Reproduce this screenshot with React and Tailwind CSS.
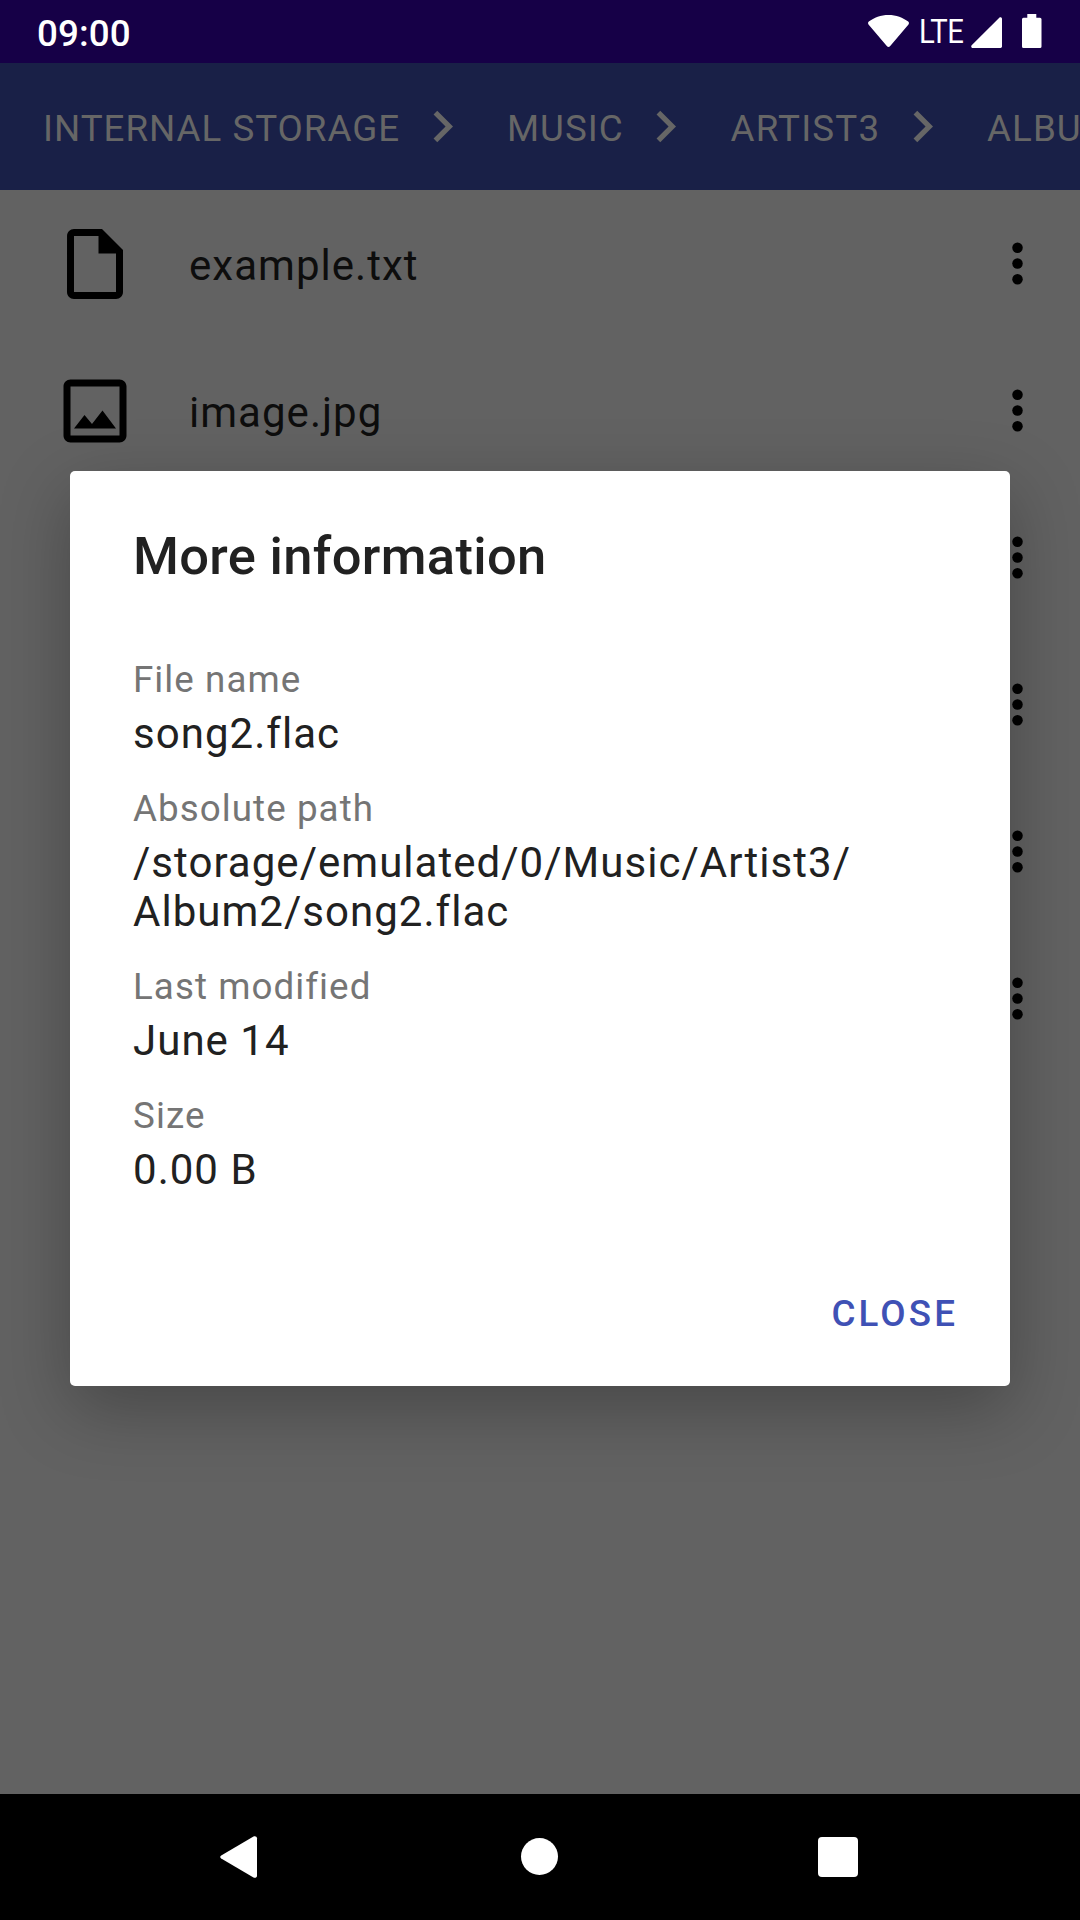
const crumbs = [
  { name: "INTERNAL STORAGE", tracking: "tracking-[0.98px]" },
  { name: "MUSIC", tracking: "tracking-[1.03px]" },
  { name: "ARTIST3", tracking: "tracking-[1.18px]" },
  { name: "ALBUM2", tracking: "tracking-[1px]" },
];

const details = [
  { label: "File name", lines: ["song2.flac"] },
  { label: "Absolute path", lines: ["/storage/emulated/0/Music/Artist3/", "Album2/song2.flac"] },
  { label: "Last modified", lines: ["June 14"] },
  { label: "Size", lines: ["0.00 B"] },
];

function FileIcon() {
  return (
    <svg viewBox="0 0 24 24" className="size-[84px]">
      <path d="M14 2H6c-1.1 0-1.99.9-1.99 2L4 20c0 1.1.89 2 1.99 2H18c1.1 0 2-.9 2-2V8l-6-6zM6 20V4h7v5h5v11H6z" />
    </svg>
  );
}

function ImageIcon() {
  return (
    <svg viewBox="0 0 24 24" className="size-[84px]">
      <path d="M19 5v14H5V5h14m0-2H5c-1.1 0-2 .9-2 2v14c0 1.1.9 2 2 2h14c1.1 0 2-.9 2-2V5c0-1.1-.9-2-2-2zm-4.86 8.86l-3 3.87L9 13.14 6 17h12l-3.86-5.14z" />
    </svg>
  );
}

function MoreIcon() {
  return (
    <svg viewBox="0 0 24 24" className="size-[63px]">
      <circle cx="12" cy="6" r="2" />
      <circle cx="12" cy="12" r="2" />
      <circle cx="12" cy="18" r="2" />
    </svg>
  );
}

function Chevron() {
  return (
    <svg viewBox="0 0 24 24" className="ml-[10.5px] mr-[33.3px] size-[63px] shrink-0 fill-current">
      <path d="M10 6L8.59 7.41 13.17 12l-4.58 4.59L10 18l6-6z" />
    </svg>
  );
}

const files = [
  { name: "example.txt", Icon: FileIcon },
  { name: "image.jpg", Icon: ImageIcon },
  { name: "" },
  { name: "" },
  { name: "" },
  { name: "" },
];

function StatusBar() {
  return (
    <header className="flex h-[63px] shrink-0 items-start justify-between bg-[#160047] pl-[37px] pr-[38.5px] text-white">
      <span className="mt-[12px] text-[36.75px] leading-[43px] font-medium tracking-[0.1px]">09:00</span>
      <div className="flex h-full items-start">
        <svg viewBox="0 0 41 32" className="mt-[15px] h-[32px] w-[41px] fill-current">
          <path d="M20.5 0C12.8 0 6 2.600.8 6.600c-.9.700-1 1.900-.3 2.800l18.500 21.800c.8 1 2.200 1 3 0l18.500-21.800c.7-.900.6-2.100-.3-2.800C35 2.600 28.200 0 20.500 0z" />
        </svg>
        <span className="ml-[10px] mt-[13px] w-[45px] origin-left scale-x-[0.9] text-[32.5px] leading-[38px] tracking-[-0.6px]">LTE</span>
        <svg viewBox="0 0 32 32" className="ml-[7px] mt-[17px] size-[31px] fill-current">
          <path d="M29.200.700 .700 29.200C-.300 30.200.3 32 1.800 32h28.700c.8 0 1.500-.700 1.500-1.500V1.800C32 .300 30.200-.300 29.200.700z" />
        </svg>
        <svg viewBox="0 0 19.5 34" className="ml-[20px] mt-[14px] h-[34px] w-[19.5px] fill-current">
          <path d="M5.300 0h9v3.700h3.700a1.500 1.500 0 0 1 1.500 1.500v27.300a1.500 1.500 0 0 1-1.500 1.500H1.500a1.500 1.500 0 0 1-1.500-1.500V5.200a1.500 1.500 0 0 1 1.500-1.500h3.800z" />
        </svg>
      </div>
    </header>
  );
}

export default function App() {
  return (
    <div className="relative flex h-[1920px] w-[1080px] flex-col overflow-hidden bg-[#626262] font-['Roboto',sans-serif]">
      <StatusBar />

      <nav className="flex h-[127px] shrink-0 items-center overflow-hidden bg-[#192047] pl-[43px] text-[36.75px] leading-[43px] whitespace-nowrap text-[#666666]">
        {crumbs.map(({ name, tracking }, i) => (
          <div key={name} className="flex shrink-0 items-center">
            <span className={`mt-[4px] ${tracking}`}>{name}</span>
            {i < crumbs.length - 1 && <Chevron />}
          </div>
        ))}
      </nav>

      <ul className="flex-1">
        {files.map(({ name, Icon }, i) => (
          <li key={i} className="flex h-[147px] items-center pl-[53px] pr-[31px]">
            <div className="size-[84px]">{Icon && <Icon />}</div>
            <span className="ml-[52px] mt-[4px] flex-1 text-[42px] leading-[49px] tracking-[1.03px] text-[#0d0d0d]">{name}</span>
            <MoreIcon />
          </li>
        ))}
      </ul>

      <footer className="flex h-[126px] shrink-0 items-center justify-between bg-black pl-[220px] pr-[222px]">
        <svg viewBox="0 0 38 44" className="h-[44px] w-[38px] fill-white">
          <path d="M33.500 1.500 1.200 20.400c-1.300.8-1.300 2.400 0 3.200l32.300 18.900c1.600.9 3.500 0 3.500-1.800V3.300c0-1.800-1.900-2.700-3.500-1.800z" />
        </svg>
        <div className="mb-px ml-[3px] size-[37px] rounded-full bg-white" />
        <div className="size-[40px] rounded-[4px] bg-white" />
      </footer>

      <section
        role="dialog"
        className="absolute top-[471px] left-[70px] flex h-[915px] w-[940px] flex-col rounded-[5px] bg-white px-[63px] shadow-[0_22px_70px_rgba(0,0,0,0.28)]"
      >
        <h2 className="mt-[54px] text-[52.5px] leading-[62px] font-medium tracking-[0.33px] text-[#212121]">More information</h2>
        <dl className="mt-[71px] flex flex-col gap-[29px]">
          {details.map(({ label, lines }) => (
            <div key={label} className="flex flex-col gap-[8px]">
              <dt className="text-[36.75px] leading-[43px] tracking-[1.06px] text-[#757575]">{label}</dt>
              <dd className="text-[42px] leading-[49px] tracking-[1.03px] text-[#212121]">
                {lines.map((line) => (
                  <div key={line} className="whitespace-nowrap">{line}</div>
                ))}
              </dd>
            </div>
          ))}
        </dl>
        <button className="mt-auto mr-[-11px] mb-[51px] self-end text-[36.75px] leading-[43px] font-medium tracking-[3.1px] text-[#3f51b5]">
          CLOSE
        </button>
      </section>
    </div>
  );
}
